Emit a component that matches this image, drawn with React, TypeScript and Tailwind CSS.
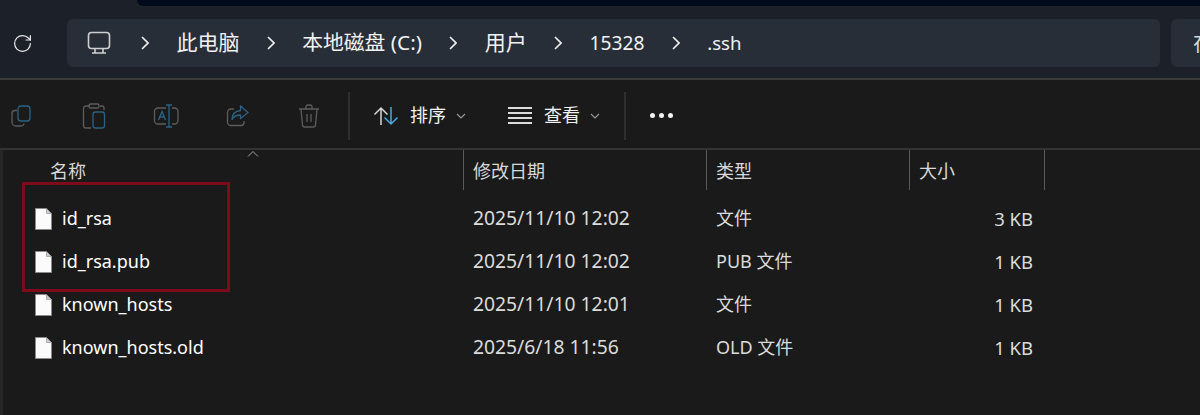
import { RotateCw } from "lucide-react";

const FONT = "font-['Noto_Sans','Noto_Sans_CJK_SC',sans-serif]";

const crumbs = [
  { label: "此电脑", className: "text-[21px]" },
  { label: "本地磁盘 (C:)", className: "text-[20.8px]" },
  { label: "用户", className: "text-[21px]" },
  { label: "15328", className: "text-[19.2px]" },
  { label: ".ssh", className: "text-[18.6px]" },
];

const files = [
  { name: "id_rsa", date: "2025/11/10 12:02", type: "文件", size: "3 KB" },
  { name: "id_rsa.pub", date: "2025/11/10 12:02", type: "PUB 文件", size: "1 KB" },
  { name: "known_hosts", date: "2025/11/10 12:01", type: "文件", size: "1 KB" },
  { name: "known_hosts.old", date: "2025/6/18 11:56", type: "OLD 文件", size: "1 KB" },
];

function Chevron() {
  return (
    <svg width="8" height="14" viewBox="0 0 8 14" fill="none" stroke="#f2f2f2" strokeWidth="1.6" className="shrink-0">
      <path d="M1 1l6 6-6 6" />
    </svg>
  );
}

function SmallCaret() {
  return (
    <svg width="10" height="6" viewBox="0 0 10 6" fill="none" stroke="#9a9a9a" strokeWidth="1.1">
      <path d="M1 1l4 4 4-4" />
    </svg>
  );
}

function Monitor() {
  return (
    <svg width="24" height="24" viewBox="0 0 24 24" fill="none" stroke="#cfcfcf" strokeWidth="1.6" className="shrink-0">
      <rect x="1.500" y="1.500" width="21" height="16" rx="3" />
      <path d="M8 18v3.500M16 18v3.500M5 22h14" />
    </svg>
  );
}

function ToolIcons() {
  return (
    <>
      <svg width="22" height="22" viewBox="0 0 22 22" fill="none" strokeWidth="1.3" className="ml-[10px]">
        <rect x="8" y="1" width="12" height="15" rx="3" stroke="#2c6284" />
        <path d="M7 5.500H5a3 3 0 0 0-3 3V17a4 4 0 0 0 4 4h5a3 3 0 0 0 3-2.500" stroke="#5c5c5c" />
      </svg>
      <svg width="24" height="26" viewBox="0 0 24 26" fill="none" strokeWidth="1.3" className="ml-[50px]">
        <path d="M8 3H4a2.500 2.500 0 0 0-2.500 2.500v17A2.500 2.500 0 0 0 4 25h5M18 3h2a2 2 0 0 1 2 2v2" stroke="#5c5c5c" />
        <rect x="7" y="1" width="10" height="4" rx="1.500" stroke="#5c5c5c" />
        <rect x="11" y="9" width="11.500" height="16" rx="2.500" stroke="#2c6284" />
      </svg>
      <svg width="26" height="24" viewBox="0 0 26 24" fill="none" strokeWidth="1.3" className="ml-[47px]">
        <path d="M13 4H5a3.500 3.500 0 0 0-3.500 3.500v9A3.500 3.500 0 0 0 5 20h8M19 4h2.500A3.500 3.500 0 0 1 25 7.500v9a3.500 3.500 0 0 1-3.500 3.500H19" stroke="#5c5c5c" />
        <path d="M16 1v22M13 1h6M13 23h6" stroke="#2c6284" />
        <path d="M5.500 16 9 7.500 12.500 16M7 13h4" stroke="#2c6284" />
      </svg>
      <svg width="24" height="22" viewBox="0 0 24 22" fill="none" strokeWidth="1.3" className="ml-[47px]">
        <path d="M8 4H5a3.500 3.500 0 0 0-3.500 3.500V17A3.500 3.500 0 0 0 5 20.500h10a3 3 0 0 0 3-3V16" stroke="#5c5c5c" />
        <path d="M14.500 1 22 7.500 14.500 13.500V10C10.500 10 7.500 11.500 6 15c0-6 3.500-9 8.500-9.500z" stroke="#2c6284" />
      </svg>
      <svg width="22" height="24" viewBox="0 0 22 24" fill="none" stroke="#5c5c5c" strokeWidth="1.3" className="ml-[48px]">
        <path d="M1 5h20M8 5V3a2 2 0 0 1 2-2h2a2 2 0 0 1 2 2v2M3 5l1.500 16a2 2 0 0 0 2 2h9a2 2 0 0 0 2-2L19 5M9 10v8M13 10v8" />
      </svg>
    </>
  );
}

function SortIcon() {
  return (
    <svg width="26" height="20" viewBox="0 0 26 20" fill="none" strokeWidth="1.5">
      <path d="M8 19V2M1.500 8.500 8 2l6.500 6.500" stroke="#d6d6d6" />
      <path d="M18 1v17M11.500 11.500 18 18l6.500-6.500" stroke="#4aa8e0" />
    </svg>
  );
}

function FileIcon() {
  return (
    <svg width="17" height="22" viewBox="0 0 17 22" className="shrink-0">
      <path d="M.5.500h11l5 5v16H.500z" fill="#fbfbfb" stroke="#8a8a8a" />
      <path d="M11.500.500v5h5z" fill="#c9c9c9" stroke="#8a8a8a" strokeWidth=".6" />
    </svg>
  );
}

function Divider() {
  return <div className="w-[2px] h-[48px] bg-[#2f2f2f]" />;
}

export default function App() {
  return (
    <div className={`${FONT} relative w-[1200px] h-[415px] overflow-hidden bg-[#1a1a1a] text-[#f2f2f2]`}>
      {/* title strip */}
      <div className="h-[6px] bg-[#1c2129] pl-[137px]">
        <div className="h-full bg-[#000a1a] rounded-bl-[6px]" />
      </div>

      {/* address bar */}
      <div className="h-[74px] flex items-start pt-[13px] bg-[#1c2129] border-b-2 border-[#3a3a3a]">
        <div className="w-[67px] h-[48px] flex items-center pl-[12px]">
          <RotateCw size={21} strokeWidth={1.4} color="#eaeaea" />
        </div>
        <div className="w-[1093px] h-[48px] rounded-[6px] bg-[#282e37] flex items-center pl-[20px]">
          <Monitor />
          <div className="ml-[30px] flex items-center gap-[27.400px]">
            {crumbs.map((c) => (
              <div key={c.label} className="flex items-center gap-[27.400px]">
                <Chevron />
                <span className={`${c.className} whitespace-nowrap`}>{c.label}</span>
              </div>
            ))}
          </div>
        </div>
        <div className="ml-[11px] flex-1 h-[48px] rounded-l-[6px] bg-[#282e37] pl-[22px] flex items-center text-[21px] text-[#d8d8d8] whitespace-nowrap overflow-hidden">
          在
        </div>
      </div>

      {/* command bar */}
      <div className="h-[70px] flex items-center pt-[3px] border-b-2 border-[#333333]">
        <ToolIcons />
        <div className="ml-[28px]"><Divider /></div>
        <div className="ml-[23px] flex items-center">
          <SortIcon />
          <span className="ml-[11px] text-[18px]">排序</span>
          <span className="ml-[10px] flex"><SmallCaret /></span>
        </div>
        <div className="ml-[42px] flex items-center">
          <div className="w-[24px] flex flex-col gap-[3.500px]">
            <div className="h-[1.500px] bg-[#dcdcdc]" />
            <div className="h-[1.500px] bg-[#dcdcdc]" />
            <div className="h-[1.500px] bg-[#dcdcdc]" />
            <div className="h-[1.500px] bg-[#dcdcdc]" />
          </div>
          <span className="ml-[12px] text-[18px]">查看</span>
          <span className="ml-[10px] flex"><SmallCaret /></span>
        </div>
        <div className="ml-[24px]"><Divider /></div>
        <div className="ml-[24px] flex gap-[4px]">
          <div className="w-[5px] h-[5px] rounded-full bg-[#f2f2f2]" />
          <div className="w-[5px] h-[5px] rounded-full bg-[#f2f2f2]" />
          <div className="w-[5px] h-[5px] rounded-full bg-[#f2f2f2]" />
        </div>
      </div>

      {/* file list */}
      <div className="border-l-[3px] border-[#262626] h-[265px]">
        <div className="grid grid-cols-[460px_243px_203px_136px_1fr] h-[40px] text-[18px] text-[#d8d8d8]">
          <div className="relative pl-[47px] flex items-center pt-[2px]">
            名称
            <svg width="12" height="6" viewBox="0 0 12 6" fill="none" stroke="#a0a0a0" className="absolute left-[244px] top-[1px]">
              <path d="M1 5.500 6 .5l5 5" />
            </svg>
          </div>
          <div className="border-l border-[#5a5a5a] pl-[9px] flex items-center pt-[2px]">修改日期</div>
          <div className="border-l border-[#5a5a5a] pl-[9px] flex items-center pt-[2px]">类型</div>
          <div className="border-l border-[#5a5a5a] border-r pl-[9px] flex items-center pt-[2px]">大小</div>
          <div />
        </div>
        <div className="pt-[7px]">
          {files.map((f) => (
            <div key={f.name} className="grid grid-cols-[460px_243px_203px_124px] h-[43px] items-center">
              <div className="pl-[32px] flex items-center gap-[10px]">
                <FileIcon />
                <span className="text-white text-[18px]">{f.name}</span>
              </div>
              <div className="pl-[10px] text-[#dcdcdc] text-[19.300px]">{f.date}</div>
              <div className="pl-[10px] text-[#dcdcdc] text-[18px]">{f.type}</div>
              <div className="text-right text-[#dcdcdc] text-[18.500px]">{f.size}</div>
            </div>
          ))}
        </div>
      </div>

      {/* red annotation box */}
      <div className="absolute left-[22px] top-[182px] w-[208px] h-[110px] border-[3px] border-[#7f0a1c]" />
    </div>
  );
}
